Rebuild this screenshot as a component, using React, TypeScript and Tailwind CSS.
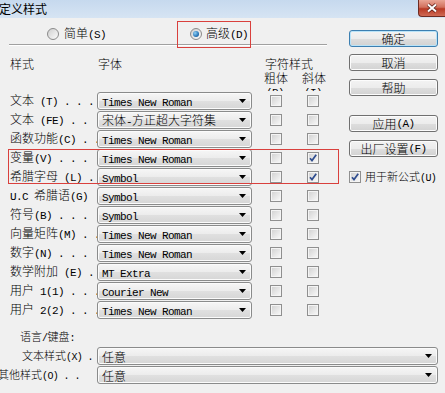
import React from "react";

const CJK_RE = /[\u2e80-\u9fff\uff00-\uffef\u3000-\u303f]/;
const SPLIT_RE = /([\u2e80-\u9fff\uff00-\uffef\u3000-\u303f]+)/;

type Size = "md" | "sm";

function T({ s, size = "md" }: { s: string; size?: Size }) {
  const parts = s.split(SPLIT_RE).filter((p) => p !== "");
  return (
    <>
      {parts.map((p, i) =>
        CJK_RE.test(p) ? (
          <span
            key={i}
            className={
              size === "sm"
                ? "font-['Noto_Sans_CJK_SC',sans-serif] font-light text-[11px]"
                : "font-['Noto_Sans_CJK_SC',sans-serif] font-light text-[12px]"
            }
          >
            {p}
          </span>
        ) : (
          <span
            key={i}
            className={
              size === "sm"
                ? "font-['Liberation_Mono',monospace] text-[10px] tracking-[-0.6px]"
                : "font-['Liberation_Mono',monospace] text-[11px] tracking-[-0.6px]"
            }
          >
            {p}
          </span>
        )
      )}
    </>
  );
}

function Arrow() {
  return (
    <svg width="7" height="4" viewBox="0 0 7 4" className="shrink-0">
      <path d="M0 0H7L3.5 4Z" fill="#000" />
    </svg>
  );
}

function Combo({ text, wide }: { text: string; wide?: boolean }) {
  return (
    <div
      className={`${
        wide ? "w-[341px]" : "w-[155px]"
      } h-[18px] shrink-0 rounded-[3px] border border-[#8a8b8b] bg-[linear-gradient(#f6f6f6_0%,#ececec_50%,#e0e0e0_51%,#d6d6d6_100%)] shadow-[inset_0_0_0_1px_#fbfbfb] flex items-center pl-[4px] pr-[5px] whitespace-pre`}
    >
      <div className="flex-1 leading-[14px] pt-[1px]">
        <T s={text} />
      </div>
      <Arrow />
    </div>
  );
}

function Check({ on }: { on?: boolean }) {
  return (
    <div className="w-[12px] h-[12px] shrink-0 border border-[#8f8f8f] bg-[#f4f4f4] p-[1px] relative">
      <div className="w-full h-full bg-[linear-gradient(135deg,#d4d4d4,#f6f6f6)]" />
      {on && (
        <svg
          width="12"
          height="12"
          viewBox="0 0 12 12"
          className="absolute left-[-1px] top-[-1px]"
        >
          <path
            d="M3 6.2 L5 8.6 L9.2 2.8"
            fill="none"
            stroke="#2f4d8f"
            strokeWidth="1.7"
          />
        </svg>
      )}
    </div>
  );
}

function Radio({ on }: { on?: boolean }) {
  return (
    <div className="w-[12px] h-[12px] shrink-0 rounded-full border border-[#8a8a8a] bg-[linear-gradient(135deg,#cfcfcf,#fbfbfb)] flex items-center justify-center">
      {on && (
        <div className="w-[6px] h-[6px] rounded-full bg-[radial-gradient(circle_at_35%_35%,#8fd0f5,#2a77b8_60%,#14477a)]" />
      )}
    </div>
  );
}

function Btn({ label, focus }: { label: string; focus?: boolean }) {
  return (
    <div
      className={`h-[17px] w-[89px] rounded-[3px] border ${
        focus
          ? "border-[#3c7fb1] shadow-[inset_0_0_0_1px_#b9e3f8]"
          : "border-[#707070] shadow-[inset_0_0_0_1px_#fcfcfc]"
      } bg-[linear-gradient(#f3f3f3_0%,#ececec_50%,#dedede_51%,#d2d2d2_100%)] flex items-center justify-center whitespace-pre leading-[14px]`}
    >
      <T s={label} />
    </div>
  );
}

const rows: [string, string, boolean][] = [
  ["文本 (T) . . .", "Times New Roman", false],
  ["文本 (FE) . .", "宋体-方正超大字符集", false],
  ["函数功能(C) . .", "Times New Roman", false],
  ["变量(V) . . .", "Times New Roman", true],
  ["希腊字母 (L) .", "Symbol", true],
  ["U.C 希腊语(G)", "Symbol", false],
  ["符号(B) . . .", "Symbol", false],
  ["向量矩阵(M) . .", "Times New Roman", false],
  ["数字(N) . . .", "Times New Roman", false],
  ["数学附加 (E) .", "MT Extra", false],
  ["用户 1(1) . . .", "Courier New", false],
  ["用户 2(2) . . .", "Times New Roman", false],
];

export default function App() {
  return (
    <div className="w-[445px] h-[393px] overflow-hidden bg-[#f0f0f0] relative text-black leading-[14px]">
      {/* title bar */}
      <div className="h-[18px] flex items-start bg-[linear-gradient(#c6d9ee,#d6e4f3)]">
        <div className="h-[18px] flex items-center -ml-[1px] font-['Noto_Sans_CJK_SC',sans-serif] text-[12px]">
          定义样式
        </div>
        <div className="ml-auto w-[27px] h-[17px] rounded-bl-[4px] border-l border-b border-[#6e2b22] bg-[linear-gradient(#e9a595_0%,#d2705d_45%,#b93a25_55%,#cf6a55_100%)] flex items-center justify-center">
          <svg width="12" height="10" viewBox="0 0 12 10">
            <path d="M2 1.5L10 8.5M10 1.5L2 8.5" stroke="#5b2019" strokeWidth="3.6" />
            <path d="M2 1.5L10 8.5M10 1.5L2 8.5" stroke="#ffffff" strokeWidth="2" />
          </svg>
        </div>
      </div>

      <div className="flex">
        {/* left column */}
        <div className="w-[349px] shrink-0">
          {/* radios */}
          <div className="mt-[9px] h-[13px] flex items-center whitespace-pre">
            <div className="w-[190px] pl-[47px] flex items-center gap-[5px]">
              <Radio />
              <span>
                <T s="简单(S)" />
              </span>
            </div>
            <div className="flex items-center gap-[4px]">
              <Radio on />
              <span>
                <T s="高级(D)" />
              </span>
            </div>
          </div>
          <div className="mt-[4px] ml-[9px] w-[318px] h-[2px] border-t border-[#a0a0a0] bg-white" />

          {/* header */}
          <div className="h-[45px] overflow-hidden whitespace-pre">
            <div className="mt-[10px] h-[14px] flex items-center">
              <div className="w-[98px] pl-[10px]">
                <T s="样式" />
              </div>
              <div className="w-[167px]">
                <T s="字体" />
              </div>
              <div>
                <T s="字符样式" />
              </div>
            </div>
            <div className="h-[14px] flex items-center pl-[264px]">
              <div className="w-[38px]">
                <T s="粗体" />
              </div>
              <div>
                <T s="斜体" />
              </div>
            </div>
            <div className="h-[14px] flex items-center pl-[266px]">
              <div className="w-[38px]">
                <T s="(B)" />
              </div>
              <div>
                <T s="(I)" />
              </div>
            </div>
          </div>

          {/* rows */}
          {rows.map(([label, font, it], i) => (
            <div key={i} className="h-[19px] flex items-center whitespace-pre">
              <div className="w-[97px] shrink-0 pl-[10px] overflow-visible">
                <T s={label} />
              </div>
              <Combo text={font} />
              <div className="ml-[18px]">
                <Check />
              </div>
              <div className="ml-[25px]">
                <Check on={it} />
              </div>
            </div>
          ))}
        </div>

        {/* right column */}
        <div className="w-[89px] shrink-0 flex flex-col">
          <div className="mt-[12px]">
            <Btn label="确定" focus />
          </div>
          <div className="mt-[7px]">
            <Btn label="取消" />
          </div>
          <div className="mt-[8px]">
            <Btn label="帮助" />
          </div>
          <div className="mt-[19px]">
            <Btn label="应用(A)" />
          </div>
          <div className="mt-[8px]">
            <Btn label="出厂设置(F)" />
          </div>
          <div className="mt-[13px] h-[14px] flex items-center gap-[4px] whitespace-pre">
            <Check on />
            <span>
              <T s="用于新公式(U)" size="sm" />
            </span>
          </div>
        </div>
      </div>

      {/* bottom */}
      <div className="pt-[11px] whitespace-pre">
        <div className="h-[14px] flex items-center pl-[20px]">
          <span>
            <T s="语言/键盘:" size="sm" />
          </span>
        </div>
        <div className="mt-[2px] h-[19px] flex items-center">
          <div className="w-[97px] shrink-0 pl-[22px]">
            <T s="文本样式(X) ." size="sm" />
          </div>
          <Combo text="任意" wide />
        </div>
        <div className="h-[19px] flex items-center">
          <div className="w-[97px] shrink-0 -ml-[2px] mr-[2px]">
            <T s="其他样式(O) . ." size="sm" />
          </div>
          <Combo text="任意" wide />
        </div>
      </div>

      {/* red annotation boxes */}
      <div className="absolute left-[177px] top-[21px] w-[74px] h-[27px] border border-[#d9403d]" />
      <div className="absolute left-[8px] top-[149px] w-[331px] h-[35px] border border-[#d9403d]" />
    </div>
  );
}
